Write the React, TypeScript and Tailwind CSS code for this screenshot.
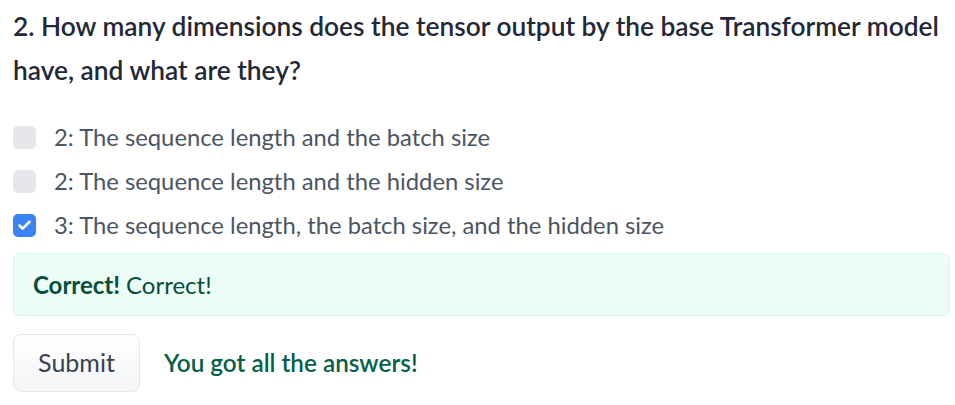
import { Check } from 'lucide-react'

const options = [
  { label: '2: The sequence length and the batch size', checked: false },
  { label: '2: The sequence length and the hidden size', checked: false },
  { label: '3: The sequence length, the batch size, and the hidden size', checked: true },
]

export default function App() {
  return (
    <div className="min-h-screen bg-white pl-[13px] pr-[5px] pt-[4px] font-['Lato',sans-serif]">
      <h2 className="text-[26.3px] font-semibold leading-[44px] text-[#1f2937]">
        2. How many dimensions does the tensor output by the base Transformer model have, and what are they?
      </h2>
      <div className="mt-[34px] flex flex-col gap-[21px]">
        {options.map((o) => (
          <label key={o.label} className="flex items-center gap-[18px] text-[23.8px] leading-[23px] text-[#4b5563]">
            {o.checked ? (
              <span className="flex h-[23px] w-[23px] items-center justify-center rounded-[5px] bg-[#3b82f6]">
                <Check className="h-[15px] w-[15px] text-white" strokeWidth={4} />
              </span>
            ) : (
              <span className="h-[23px] w-[23px] rounded-[5px] bg-[#e5e7eb]" />
            )}
            {o.label}
          </label>
        ))}
      </div>
      <div className="mt-[16px] flex h-[63px] items-center rounded-[7px] border border-[#d1fae5] bg-[#ecfdf5] px-[19px] text-[24px] text-[#064e3b]">
        <span className="font-bold">Correct!</span>
        <span className="ml-[6px]">Correct!</span>
      </div>
      <div className="mt-[18px] flex items-center gap-[24px]">
        <button className="h-[58px] w-[127px] rounded-[8px] border border-[#e5e7eb] bg-gradient-to-b from-white to-[#f3f4f6] text-[25px] text-[#374151]">
          Submit
        </button>
        <span className="text-[24.3px] font-semibold text-[#065f46]">You got all the answers!</span>
      </div>
    </div>
  )
}
